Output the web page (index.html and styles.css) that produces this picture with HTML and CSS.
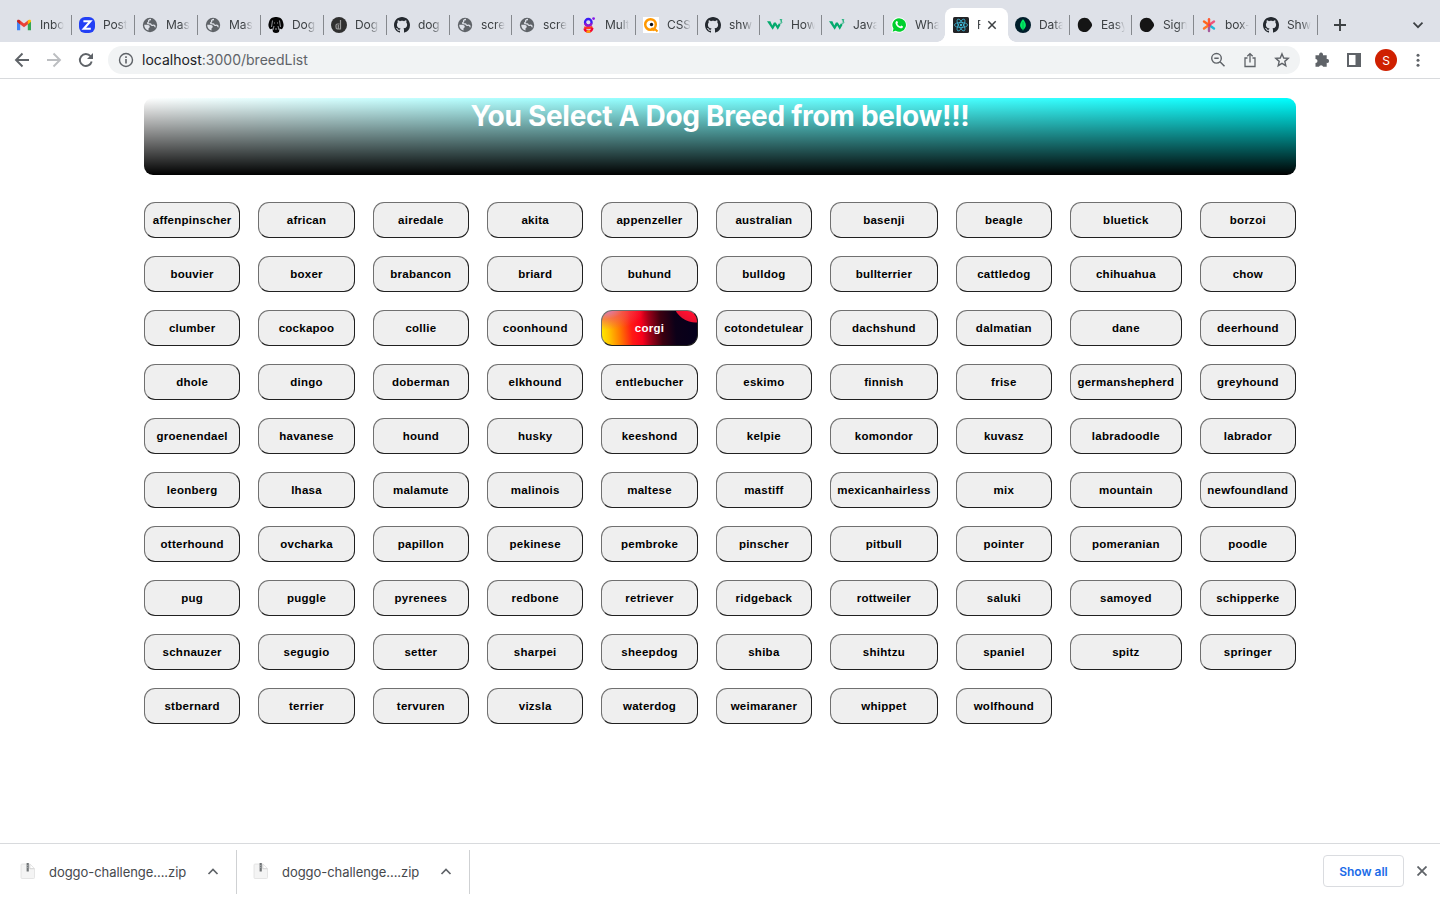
FILE: index.html
```html
<!DOCTYPE html>
<html lang="en">
<head>
<meta charset="utf-8">
<title>Dog breeds</title>
<link rel="stylesheet" href="styles.css">
</head>
<body>
<svg class="defs" width="0" height="0">
  <symbol id="globe" viewBox="0 0 16 16"><circle cx="8" cy="8" r="7.200" fill="#5f6368"/><path d="M9 2.500c-1.600 0-2.800.9-2.300 2 .3.800-1.200.6-1.200 1.600 0 .9 1.500.6 2.700.8 1.200.2.700 1.500 1.900 1.500.9 0 1.300-.4 2.200-.1.800.3.900 1 .6 1.900" fill="none" stroke="#dee1e8" stroke-width="1.300"/><path d="M2.200 7.800h2.300c1.600 0 3.300.4 3.300 1.900 0 1.100-1.300 1-1.300 2.100v1.800C3.800 13 2.200 10.800 2.200 7.800z" fill="#dee1e8"/></symbol>
  <symbol id="github" viewBox="0 0 16 16"><path fill="#24292f" d="M8 0C3.580 0 0 3.580 0 8c0 3.540 2.290 6.530 5.470 7.590.4.070.55-.17.55-.38 0-.19-.01-.82-.01-1.490-2.010.37-2.530-.49-2.690-.94-.09-.23-.48-.94-.82-1.130-.28-.15-.68-.52-.01-.53.63-.01 1.080.58 1.230.82.72 1.210 1.870.87 2.330.66.070-.52.280-.87.510-1.070-1.780-.2-3.640-.89-3.640-3.950 0-.87.310-1.590.82-2.150-.08-.2-.36-1.020.08-2.120 0 0 .67-.21 2.200.82.640-.18 1.320-.27 2-.27s1.360.09 2 .27c1.530-1.040 2.200-.82 2.200-.82.440 1.100.160 1.920.080 2.120.510.560.820 1.270.820 2.150 0 3.070-1.870 3.750-3.650 3.950.290.250.540.730.540 1.480 0 1.070-.010 1.930-.010 2.200 0 .21.150.46.550.38A8 8 0 0 0 16 8c0-4.420-3.580-8-8-8z"/></symbol>
  <symbol id="w3" viewBox="0 0 16 16"><path d="M0 4.300h3.400l1.900 4.200 1.600-3.100h1.900l1.800 3.100L12 6.200l1.600 1.600-2.800 5-2.600-4.200-2.500 4.200z" fill="#04aa6d"/><path d="M12.800 2.700h2l-1.100 1.500c1.900 0 1.700 2.500-.9 1.900" fill="none" stroke="#04aa6d" stroke-width="1"/></symbol>
  <symbol id="blob" viewBox="0 0 16 16"><path d="M7.500.8c2 0 3.700.8 5 2.400 1.100 1.500 2.600 3 2.600 4.800s-1.500 3-2.600 4.500c-1.200 1.700-3 2.600-5 2.600C3.700 15.100.8 12.300.8 8S3.700.8 7.500.8z" fill="#151515"/></symbol>
  <symbol id="zip" viewBox="0 0 16 16"><path d="M2 1h8l4.500 4.500v9q0 1-1 1H2q-1 0-1-1V2q0-1 1-1z" fill="#f4f4f4" stroke="#e0e0e0" stroke-width=".8"/><path d="M9.800 1.500v4.200h4.400" fill="#fff" stroke="#c8c8c8" stroke-width=".8"/><path d="M7.700 0v8.500" stroke="#707476" stroke-width="2.200"/><path d="M7.700 2v3" stroke="#a7abad" stroke-width="1" stroke-dasharray="1 1"/></symbol>
  <symbol id="up" viewBox="0 0 12 12"><path d="M1.500 8 6 3.500 10.500 8" fill="none" stroke="#5f6368" stroke-width="1.700"/></symbol>
</svg>

<header class="browser">
  <div class="tabs">
    <div class="tab tab-wide"><svg class="fav" viewBox="0 0 16 16"><path d="M1 13.300V4.200L4.200 6.500v6.800z" fill="#4285f4"/><path d="M11.800 6.500 15 4.200v9.100h-3.200z" fill="#34a853"/><path d="M2.600 4.300 8 8.400l5.400-4.100" fill="none" stroke="#ea4335" stroke-width="3"/><path d="M1 4.800V4c0-1.300 1.500-1.600 2.500-.9l.7.600v3.500z" fill="#c5221f"/><path d="M15 4.800V4c0-1.300-1.500-1.600-2.500-.9l-.7.600v3.500z" fill="#fbbc04"/></svg><span class="label">Inbo</span></div>
    <div class="tab tab-wide"><svg class="fav" viewBox="0 0 16 16"><rect width="16" height="16" rx="6" fill="#2340f5"/><path d="M4.400 4.300h7L4.800 11.800h7" fill="none" stroke="#fff" stroke-width="2.100"/></svg><span class="label">Post</span></div>
    <div class="tab tab-wide"><svg class="fav"><use href="#globe"/></svg><span class="label">Mas</span></div>
    <div class="tab tab-wide"><svg class="fav"><use href="#globe"/></svg><span class="label">Mas</span></div>
    <div class="tab tab-wide"><svg class="fav" viewBox="0 0 16 16"><path d="M5 .5Q8-.6 11 .5q3 .8 4 4.500 1.400 4-.5 6.500-1.300 1.500-2.800-.3L11 15q-3 1.800-6 0l-.7-3.800q-1.500 1.800-2.800.3Q-.4 9 1 5 2 1.300 5 .5z" fill="#050505"/><path d="M4.500 3.500 3.500 10M11.500 3.500l1 6.500M6 9l-1 4M10 9l1 4M7 12h2" fill="none" stroke="#cfd2d8" stroke-width=".7"/><path d="M6.200 6h.8M9 6h.8" stroke="#eee" stroke-width=".8"/></svg><span class="label">Dog</span></div>
    <div class="tab tab-wide"><svg class="fav" viewBox="0 0 16 16"><circle cx="8" cy="8" r="8" fill="#303030"/><path d="M9.500 3v9H6.500q-1.500 0-1.500-2V8.500Q5 7 6.500 7h2M7.300 8v4" fill="none" stroke="#999" stroke-width="1.200"/></svg><span class="label">Dog</span></div>
    <div class="tab tab-wide"><svg class="fav"><use href="#github"/></svg><span class="label">dog</span></div>
    <div class="tab"><svg class="fav"><use href="#globe"/></svg><span class="label">scre</span></div>
    <div class="tab"><svg class="fav"><use href="#globe"/></svg><span class="label">scre</span></div>
    <div class="tab"><svg class="fav" viewBox="0 0 16 16"><g fill="none" stroke-width="2.300"><circle cx="7.300" cy="5.300" r="3.300" stroke="#3a1cf5"/><path d="M4.100 6.300a3.300 3.300 0 0 0 6.400 0" stroke="#9a18c8"/><path d="M3.200 10.400q4 1.300 8.300-.3" stroke="#ff3a20"/><path d="M3.500 11.600q.6 3 3.900 3 3.500 0 4-3.800" stroke="#f50532"/><path d="M5.500 14.300q2 .6 3.800 0" stroke="#ffa000"/></g><circle cx="12.600" cy="1.600" r="1.400" fill="#8819e8"/></svg><span class="label">Mult</span></div>
    <div class="tab"><svg class="fav" viewBox="0 0 16 16"><path fill="#fff" d="M0 0h16v16H0z"/><circle cx="7.500" cy="7.500" r="5.300" fill="none" stroke="#ff9800" stroke-width="2.500"/><path d="m8.500 11 2.300 2 1.200-1 2.500 2.500" fill="none" stroke="#ff9800" stroke-width="2"/><circle cx="8.500" cy="7.500" r="1.700" fill="#111"/></svg><span class="label">CSS</span></div>
    <div class="tab"><svg class="fav"><use href="#github"/></svg><span class="label">shw</span></div>
    <div class="tab"><svg class="fav"><use href="#w3"/></svg><span class="label">How</span></div>
    <div class="tab"><svg class="fav"><use href="#w3"/></svg><span class="label">Java</span></div>
    <div class="tab tab-plain"><svg class="fav" viewBox="0 0 16 16"><path d="M8 .3a7.700 7.700 0 1 1-3.600 14.500L.3 16l1.200-4A7.700 7.700 0 0 1 8 .3z" fill="#fff"/><path d="M8 1.200a6.800 6.800 0 1 1-3.400 12.600l-3 .9.900-3A6.800 6.800 0 0 1 8 1.200z" fill="#00d02d"/><path d="M5.300 4.300c.6-.5 1-.3 1.200.2l.5 1.300-.7 1c.7 1.400 1.600 2.200 3 2.800l1-1.100 1.700.9c0 1.500-1.400 2.200-2.500 1.900C7 10.700 5 8.600 4.500 6.600c-.2-1 .2-1.800.8-2.300z" fill="#fff"/></svg><span class="label">Wha</span></div>
    <div class="tab tab-active"><svg class="fav" viewBox="0 0 16 16"><rect width="16" height="16" rx="1.500" fill="#222326"/><g fill="none" stroke="#40bddd" stroke-width=".75"><ellipse cx="8" cy="8" rx="6.600" ry="2.500"/><ellipse cx="8" cy="8" rx="6.600" ry="2.500" transform="rotate(60 8 8)"/><ellipse cx="8" cy="8" rx="6.600" ry="2.500" transform="rotate(120 8 8)"/></g><circle cx="8" cy="8" r="1.200" fill="#40bddd"/></svg><span class="label">R</span><svg class="close" viewBox="0 0 10 10"><path d="m1.300 1.300 7.400 7.400m0-7.400L1.300 8.700" stroke="#3c4043" stroke-width="1.500"/></svg></div>
    <div class="tab"><svg class="fav" viewBox="0 0 16 16"><circle cx="8" cy="8" r="8" fill="#001e2b"/><path d="M8 2.300c4 4.400 3.600 8 .4 10.300L8 14l-.4-1.400C4.400 10.300 4 6.700 8 2.300z" fill="#00ed64"/><path d="M8 5v7" stroke="#009b4b" stroke-width=".7"/></svg><span class="label">Data</span></div>
    <div class="tab"><svg class="fav"><use href="#blob"/></svg><span class="label">Easy</span></div>
    <div class="tab"><svg class="fav"><use href="#blob"/></svg><span class="label">Sign</span></div>
    <div class="tab"><svg class="fav" viewBox="0 0 16 16"><g stroke-width="2.400" stroke-linecap="round"><path d="m8 8 5 3.500" stroke="#20b8d8"/><path d="m8 8 5-3.500" stroke="#f0527a"/><path d="M8 8v6" stroke="#a65b9c"/><path d="M8 8V2.200" stroke="#ff5a31"/><path d="m8 8-5 3.500" stroke="#ff7527"/><path d="M8 8 3 4.500" stroke="#ff651c"/></g><circle cx="8.500" cy="8" r="1.500" fill="#e63865"/></svg><span class="label">box-</span></div>
    <div class="tab"><svg class="fav"><use href="#github"/></svg><span class="label">Shw</span></div>
    <svg class="plus" viewBox="0 0 12 12"><path d="M6 0v12M0 6h12" stroke="#3c4043" stroke-width="1.900"/></svg>
    <svg class="chevron" viewBox="0 0 12 12"><path d="m1.500 3.700 4.500 4.500 4.500-4.500" fill="none" stroke="#3c4043" stroke-width="1.700"/></svg>
  </div>
  <div class="toolbar">
    <svg class="nav" viewBox="0 0 16 16"><path d="M15 8H2m6.500-6.500L2 8l6.500 6.500" fill="none" stroke="#5f6368" stroke-width="1.900"/></svg>
    <svg class="nav" viewBox="0 0 16 16"><path d="M1 8h13M7.500 1.500 14 8l-6.500 6.500" fill="none" stroke="#bcbec1" stroke-width="1.900"/></svg>
    <svg class="nav" viewBox="0 0 16 16"><path d="M13.700 9.500A6 6 0 1 1 12.500 4.200" fill="none" stroke="#5f6368" stroke-width="1.900"/><path d="M15 1v6H9z" fill="#5f6368"/></svg>
    <div class="address">
      <svg class="info" viewBox="0 0 16 16"><circle cx="8" cy="8" r="6.500" fill="none" stroke="#5f6368" stroke-width="1.400"/><path d="M8 7v4.500M8 4.300v1.600" stroke="#5f6368" stroke-width="1.600"/></svg>
      <span class="url"><b>localhost</b>:3000/breedList</span>
      <svg class="action" viewBox="0 0 16 16"><circle cx="6.500" cy="6.300" r="4.800" fill="none" stroke="#5f6368" stroke-width="1.400"/><path d="M4.300 6.300h4.400M10 9.800l4.500 4.500" stroke="#5f6368" stroke-width="1.500"/></svg>
      <svg class="action" viewBox="0 0 16 16"><path d="M5.500 6H3v8.500h10V6h-2.500M8 10.500V2M5.300 4.300 8 1.600l2.700 2.700" fill="none" stroke="#5f6368" stroke-width="1.300"/></svg>
      <svg class="action" viewBox="0 0 16 16"><path d="m8 1.900 1.750 4.100 4.450.4-3.400 2.950 1 4.350L8 11.400l-3.800 2.300 1-4.350L1.800 6.400 6.250 6z" fill="none" stroke="#5f6368" stroke-width="1.400"/></svg>
    </div>
    <svg class="tool" viewBox="0 0 16 16"><path d="M1.500 3.300h3.700a2 2 0 1 1 3.700 0h3.800v3.800a1.900 1.900 0 1 1 0 3.700v3.900H9.200a2.200 2.200 0 0 0-4.200 0H1.500V11a2 2 0 0 0 0-4z" fill="#5f6368"/></svg>
    <svg class="tool" viewBox="0 0 16 16"><path d="M1 1h14v14H1zm2 2v10h6.500V3z" fill="#5f6368" fill-rule="evenodd"/></svg>
    <span class="avatar">S</span>
    <svg class="dots" viewBox="0 0 4 16"><g fill="#5f6368"><circle cx="2" cy="3.200" r="1.500"/><circle cx="2" cy="8.200" r="1.500"/><circle cx="2" cy="13.200" r="1.500"/></g></svg>
  </div>
</header>

<main class="page">
  <h1 class="banner">You Select A Dog Breed from below!!!</h1>
  <div class="breeds">
    <button class="breed">affenpinscher</button><button class="breed">african</button><button class="breed">airedale</button><button class="breed">akita</button><button class="breed">appenzeller</button><button class="breed">australian</button><button class="breed">basenji</button><button class="breed">beagle</button><button class="breed">bluetick</button><button class="breed">borzoi</button>
    <button class="breed">bouvier</button><button class="breed">boxer</button><button class="breed">brabancon</button><button class="breed">briard</button><button class="breed">buhund</button><button class="breed">bulldog</button><button class="breed">bullterrier</button><button class="breed">cattledog</button><button class="breed">chihuahua</button><button class="breed">chow</button>
    <button class="breed">clumber</button><button class="breed">cockapoo</button><button class="breed">collie</button><button class="breed">coonhound</button><button class="breed breed-hot">corgi</button><button class="breed">cotondetulear</button><button class="breed">dachshund</button><button class="breed">dalmatian</button><button class="breed">dane</button><button class="breed">deerhound</button>
    <button class="breed">dhole</button><button class="breed">dingo</button><button class="breed">doberman</button><button class="breed">elkhound</button><button class="breed">entlebucher</button><button class="breed">eskimo</button><button class="breed">finnish</button><button class="breed">frise</button><button class="breed">germanshepherd</button><button class="breed">greyhound</button>
    <button class="breed">groenendael</button><button class="breed">havanese</button><button class="breed">hound</button><button class="breed">husky</button><button class="breed">keeshond</button><button class="breed">kelpie</button><button class="breed">komondor</button><button class="breed">kuvasz</button><button class="breed">labradoodle</button><button class="breed">labrador</button>
    <button class="breed">leonberg</button><button class="breed">lhasa</button><button class="breed">malamute</button><button class="breed">malinois</button><button class="breed">maltese</button><button class="breed">mastiff</button><button class="breed">mexicanhairless</button><button class="breed">mix</button><button class="breed">mountain</button><button class="breed">newfoundland</button>
    <button class="breed">otterhound</button><button class="breed">ovcharka</button><button class="breed">papillon</button><button class="breed">pekinese</button><button class="breed">pembroke</button><button class="breed">pinscher</button><button class="breed">pitbull</button><button class="breed">pointer</button><button class="breed">pomeranian</button><button class="breed">poodle</button>
    <button class="breed">pug</button><button class="breed">puggle</button><button class="breed">pyrenees</button><button class="breed">redbone</button><button class="breed">retriever</button><button class="breed">ridgeback</button><button class="breed">rottweiler</button><button class="breed">saluki</button><button class="breed">samoyed</button><button class="breed">schipperke</button>
    <button class="breed">schnauzer</button><button class="breed">segugio</button><button class="breed">setter</button><button class="breed">sharpei</button><button class="breed">sheepdog</button><button class="breed">shiba</button><button class="breed">shihtzu</button><button class="breed">spaniel</button><button class="breed">spitz</button><button class="breed">springer</button>
    <button class="breed">stbernard</button><button class="breed">terrier</button><button class="breed">tervuren</button><button class="breed">vizsla</button><button class="breed">waterdog</button><button class="breed">weimaraner</button><button class="breed">whippet</button><button class="breed">wolfhound</button>
  </div>
</main>

<footer class="downloads">
  <div class="download"><svg class="file" viewBox="0 0 16 16"><use href="#zip"/></svg><span class="filename">doggo-challenge....zip</span><svg class="up"><use href="#up"/></svg></div>
  <div class="download"><svg class="file" viewBox="0 0 16 16"><use href="#zip"/></svg><span class="filename">doggo-challenge....zip</span><svg class="up"><use href="#up"/></svg></div>
  <button class="show-all">Show all</button>
  <svg class="dismiss" viewBox="0 0 10 10"><path d="m.5.5 9 9m0-9-9 9" stroke="#5f6368" stroke-width="1.800"/></svg>
</footer>
</body>
</html>
```
FILE: styles.css
```css
* { box-sizing: border-box; }
body {
  margin: 0;
  height: 900px;
  overflow: hidden;
  display: flex;
  flex-direction: column;
  background: #fff;
  font-family: Inter, sans-serif;
}
svg { flex: none; display: block; }
.defs { position: absolute; }

/* Tab strip */
.tabs {
  display: flex;
  align-items: flex-start;
  height: 42px;
  padding: 8px 16px 0 9px;
  background: #dee1e8;
}
.tab {
  position: relative;
  flex: none;
  display: flex;
  align-items: center;
  width: 62px;
  height: 34px;
  padding-left: 7px;
}
.tab-wide { width: 63px; }
.tab::after {
  content: "";
  position: absolute;
  right: 0;
  top: 7px;
  width: 1px;
  height: 20px;
  background: #85888d;
}
.tab-plain::after { display: none; }
.fav { width: 16px; height: 16px; }
.label {
  width: 24px;
  margin-left: 8px;
  white-space: nowrap;
  font-size: 12px;
  line-height: 16px;
  letter-spacing: -0.1px;
  color: #3c4043;
  -webkit-mask-image: linear-gradient(90deg, #000 60%, transparent);
  mask-image: linear-gradient(90deg, #000 60%, transparent);
}
.tab-active { background: #fff; border-radius: 8px 8px 0 0; box-shadow: -1px 0 #fff; }
.tab-active::before,
.tab-active::after {
  content: "";
  position: absolute;
  top: auto;
  bottom: 0;
  width: 8px;
  height: 8px;
}
.tab-active::before { left: -9px; background: radial-gradient(circle at 0 0, transparent 7.500px, #fff 8px); }
.tab-active::after { right: -8px; background: radial-gradient(circle at 100% 0, transparent 7.500px, #fff 8px); }
.tab-active .label { width: 4px; }
.close { width: 10px; height: 10px; margin-left: 6px; }
.plus { width: 12px; height: 12px; margin: 11px 0 0 16px; }
.chevron { width: 12px; height: 12px; margin: 11px 0 0 auto; }

/* Toolbar */
.toolbar {
  display: flex;
  align-items: center;
  height: 37px;
  padding: 0 20px 0 14px;
  border-bottom: 1px solid #d8dadd;
}
.nav { width: 16px; height: 16px; margin-right: 16px; }
.address {
  display: flex;
  align-items: center;
  width: 1192px;
  height: 28px;
  margin-left: -2px;
  padding: 0 10px;
  border-radius: 14px;
  background: #f1f3f4;
}
.info { width: 16px; height: 16px; }
.url {
  flex: 1;
  margin-left: 8px;
  font-size: 14px;
  line-height: 20px;
  color: #5f6368;
}
.url b { font-weight: 400; color: #202124; }
.action { width: 16px; height: 16px; margin-left: 16px; }
.tool { width: 16px; height: 16px; margin-left: 14px; }
.tool + .tool { margin-left: 16px; }
.avatar {
  display: grid;
  place-items: center;
  width: 22px;
  height: 22px;
  margin-left: 13px;
  border-radius: 50%;
  background: #cf2000;
  color: #fff;
  font-size: 12px;
}
.dots { width: 4px; height: 16px; margin-left: auto; }

/* Breed list */
.page { flex: 1; padding: 19px 144px 0; }
.banner {
  height: 77px;
  margin: 0 0 27px;
  border-radius: 9px;
  background: linear-gradient(to top, #000, transparent), linear-gradient(to right, #fff, cyan);
  color: #fff;
  text-align: center;
  font-size: 28px;
  font-weight: 700;
  line-height: 36px;
  letter-spacing: -0.29px;
}
.breeds {
  display: grid;
  grid-template-columns: repeat(6, 96.350px) 107.700px 96.250px 111.750px 96.200px;
  grid-auto-rows: 36px;
  gap: 18px;
}
.breed {
  padding: 0;
  border: 1px solid;
  border-color: #707070 #202020 #202020 #707070;
  border-radius: 11px;
  background: #efefef;
  color: #000;
  font: 700 11.500px "Liberation Sans", Arial, sans-serif;
  letter-spacing: 0.260px;
}
.breed-hot {
  color: #fff;
  background:
    radial-gradient(circle at 95px -11px, #f03 0, #ff1030 16px, #e81030 23px, transparent 24px),
    radial-gradient(ellipse 40px 20px at 4px 0, #d77ac8 0, rgba(240, 80, 110, .6) 45%, transparent),
    linear-gradient(85deg, #fff000 0, #ffc400 9%, #ff7a00 20%, #ff1a14 32%, #f8001c 42%, #a00018 50%, #3c0010 62%, #0c0018 76%, #04001c 100%);
  background-origin: border-box;
}

/* Downloads shelf */
.downloads {
  display: flex;
  align-items: flex-start;
  height: 57px;
  padding: 6px 13px 0 0;
  border-top: 1px solid #d8dadd;
}
.download {
  display: flex;
  align-items: center;
  width: 237px;
  height: 44px;
  padding: 0 17px 0 20px;
  border-right: 1px solid #cfd1d3;
}
.download + .download { width: 233px; padding-left: 16px; }
.file { width: 16px; height: 16px; margin-top: -2px; }
.filename { margin-left: 13px; font-size: 13px; letter-spacing: -0.050px; color: #45484c; white-space: nowrap; }
.up { width: 12px; height: 12px; margin-left: auto; }
.show-all {
  width: 81px;
  height: 32px;
  margin: 5px 13px 0 auto;
  padding: 0;
  border: 1px solid #dadce0;
  border-radius: 4px;
  background: #fff;
  color: #1a6be8;
  font: 600 12px Inter, sans-serif;
}
.dismiss { width: 10px; height: 10px; margin-top: 16px; }
```
